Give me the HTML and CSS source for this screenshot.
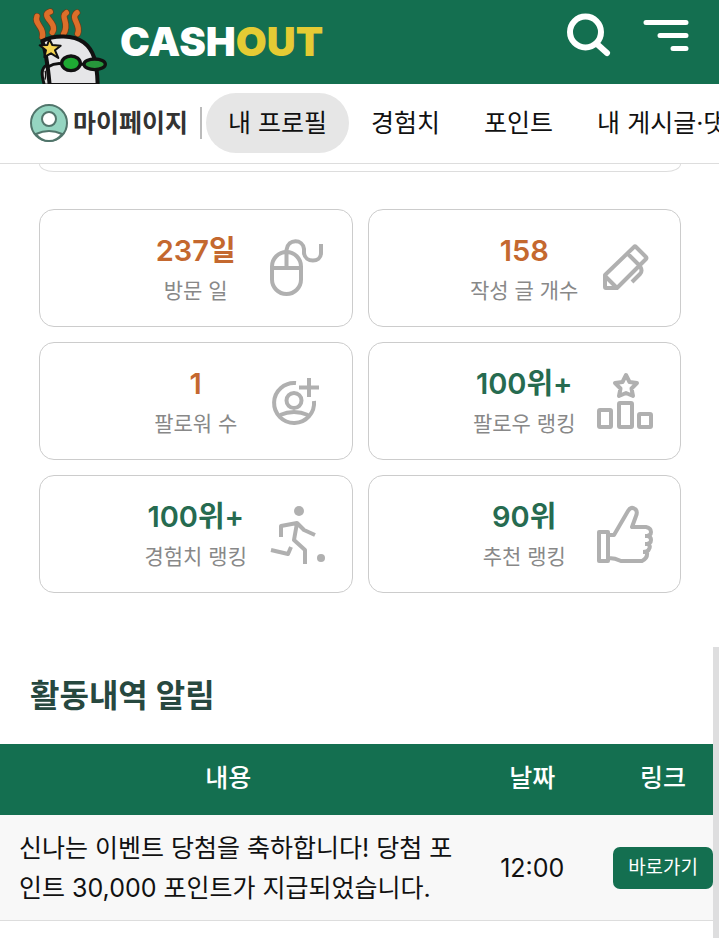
FILE: index.html
```
<!DOCTYPE html>
<html lang="ko">
<head>
    <meta charset="UTF-8">
    <meta name="viewport" content="width=device-width, initial-scale=1.0">
    <title>CASHOUT - 마이페이지</title>
    <link rel="stylesheet" href="styles.css">
</head>
<body>
    <header class="header">
        <a class="logo" href="#">
            <svg class="logo-mark" viewBox="0 0 270 237" aria-hidden="true">
                <!-- hair -->
                <g fill="none" stroke-linecap="round" stroke-linejoin="round">
                    <g stroke="#6b3a18" stroke-width="20">
                        <path d="M36 34C26 58 60 66 52 96"/>
                        <path d="M76 20C50 28 78 46 84 62Q88 74 82 82"/>
                        <path d="M124 23C104 36 136 54 116 86"/>
                        <path d="M156 23C134 40 170 58 158 86"/>
                    </g>
                    <g stroke="#dc6f2a" stroke-width="16">
                        <path d="M36 34C26 58 60 66 52 96"/>
                        <path d="M76 20C50 28 78 46 84 62Q88 74 82 82"/>
                        <path d="M124 23C104 36 136 54 116 86"/>
                        <path d="M156 23C134 40 170 58 158 86"/>
                    </g>
                </g>
                <!-- head -->
                <path d="M66 180C46 190 50 212 58 240H80Z" fill="#ddd" stroke="#111" stroke-width="9"/>
                <path d="M52 108C88 88 146 90 176 112C206 134 216 170 218 240H74C70 200 66 150 52 108Z" fill="#e6e6e8" stroke="#111" stroke-width="12" stroke-linejoin="round"/>
                <path d="M60 197Q64 206 60 224" fill="none" stroke="#111" stroke-width="4"/>
                <!-- glasses -->
                <path d="M68 186Q88 174 108 176M168 178H184" fill="none" stroke="#111" stroke-width="9"/>
                <ellipse cx="138" cy="175" rx="28" ry="22" fill="#1eaa33" stroke="#111" stroke-width="10"/>
                <ellipse cx="209" cy="178" rx="32" ry="16" fill="#27963b" stroke="#111" stroke-width="10"/>
                <path d="M73 102L82 120L107 122L90 136L100 159L78 145L58 156L63 136L44 121L67 120Z" fill="#f5d552" stroke="#111" stroke-width="6" stroke-linejoin="round"/>
            </svg>
            <span class="logo-text">CASH<span class="logo-accent">OUT</span></span>
        </a>
        <div class="header-actions">
            <button class="icon-btn" type="button" aria-label="검색">
                <svg width="46" height="46" viewBox="0 0 46 46" fill="none" stroke="#fff" stroke-width="6" stroke-linecap="round">
                    <circle cx="18.500" cy="20" r="15.500"/>
                    <path d="M30 32L40 41"/>
                </svg>
            </button>
            <button class="icon-btn" type="button" aria-label="메뉴">
                <svg width="46" height="46" viewBox="0 0 46 46" fill="none" stroke="#fff" stroke-width="5" stroke-linecap="round">
                    <path d="M3 10.500H43M17 23.500H43M30 36.500H43"/>
                </svg>
            </button>
        </div>
    </header>

    <nav class="nav">
        <a class="nav-title" href="#">
            <svg width="38" height="38" viewBox="0 0 38 38" aria-hidden="true">
                <circle cx="19" cy="19" r="18" fill="#95d5c1" stroke="#51756b" stroke-width="2"/>
                <path d="M6 30Q19 24 32 30Q27 37 19 37Q11 37 6 30Z" fill="#fff" stroke="#51756b" stroke-width="2"/>
                <circle cx="19" cy="15" r="7" fill="#fff" stroke="#51756b" stroke-width="2"/>
            </svg>
            마이페이지
        </a>
        <ul class="nav-list">
            <li><a class="nav-link active" href="#">내 프로필</a></li>
            <li><a class="nav-link" href="#">경험치</a></li>
            <li><a class="nav-link" href="#">포인트</a></li>
            <li><a class="nav-link" href="#">내 게시글·댓글</a></li>
        </ul>
    </nav>

    <main class="content">
        <div class="profile-card"></div>

        <section class="stats">
            <div class="stat">
                <div class="stat-text">
                    <p class="stat-value">237일</p>
                    <p class="stat-label">방문 일</p>
                </div>
                <svg class="stat-icon" viewBox="0 0 56 56">
                    <rect x="3" y="12" width="29" height="42" rx="14.500"/>
                    <path d="M3 28H32M17.500 28V10C19 -2 34 -1 35 9V13C36 23 52 23 52 13V4"/>
                </svg>
            </div>
            <div class="stat">
                <div class="stat-text">
                    <p class="stat-value">158</p>
                    <p class="stat-label">작성 글 개수</p>
                </div>
                <svg class="stat-icon" viewBox="0 0 56 56">
                    <path d="M8 35L37 7Q38 6 39 7L49 17Q50 18 49 19L20 48H9Q8 48 8 47ZM8 36L20 48M31 14L43 26M43 26Q46 31 43 34L35 42"/>
                </svg>
            </div>
            <div class="stat">
                <div class="stat-text">
                    <p class="stat-value">1</p>
                    <p class="stat-label">팔로워 수</p>
                </div>
                <svg class="stat-icon" viewBox="0 0 56 56">
                    <path d="M27 10A20 20 0 1 0 45 28M40 5V24M30 14.500H50"/>
                    <circle cx="25" cy="27.500" r="7.500"/>
                    <path d="M11 42Q25 36 39 42"/>
                </svg>
            </div>
            <div class="stat">
                <div class="stat-text">
                    <p class="stat-value rank">100위+</p>
                    <p class="stat-label">팔로우 랭킹</p>
                </div>
                <svg class="stat-icon" viewBox="0 0 56 56">
                    <path d="M29 2L32.500 9L40 10L34.500 15.500L36 23L29 20L22 23L23.500 15.500L18 10L25.500 9Z"/>
                    <rect x="2" y="37" width="12" height="17" rx="1"/>
                    <rect x="22" y="30" width="13" height="24" rx="1"/>
                    <rect x="42" y="41" width="12" height="13" rx="1"/>
                </svg>
            </div>
            <div class="stat">
                <div class="stat-text">
                    <p class="stat-value rank">100위+</p>
                    <p class="stat-label">경험치 랭킹</p>
                </div>
                <svg class="stat-icon" viewBox="0 0 56 56">
                    <g fill="#b0b0b0" stroke="none">
                        <circle cx="30" cy="5" r="5"/>
                        <circle cx="52" cy="52" r="4"/>
                    </g>
                    <path d="M12 31V20L28 17L35 24L46 29M28 17L25 34L36 44V58M2 44L19 48L22 41"/>
                </svg>
            </div>
            <div class="stat">
                <div class="stat-text">
                    <p class="stat-value rank">90위</p>
                    <p class="stat-label">추천 랭킹</p>
                </div>
                <svg class="stat-icon" viewBox="0 0 56 56">
                    <path d="M2 26H11V55H2ZM12 29H17L31 5Q34 0 38 3Q41 5 39 10L35 21H49Q54 22 54 26Q54 30 48 30M49 30H51Q54 31 54 34Q54 38 48 38M49 38H51Q54 40 52 43Q51 46 46 46M47 46H50Q51 52 45 55H24Q18 52 12 52"/>
                </svg>
            </div>
        </section>
    </main>

    <section class="activity">
        <h2 class="activity-title">활동내역 알림</h2>
        <table class="activity-table">
            <thead>
                <tr>
                    <th class="col-content">내용</th>
                    <th class="col-date">날짜</th>
                    <th class="col-link">링크</th>
                </tr>
            </thead>
            <tbody>
                <tr>
                    <td class="message">신나는 이벤트 당첨을 축하합니다! 당첨 포인트 30,000 포인트가 지급되었습니다.</td>
                    <td class="date">12:00</td>
                    <td><a class="go-btn" href="#">바로가기</a></td>
                </tr>
            </tbody>
        </table>
    </section>
</body>
</html>
```

FILE: styles.css
```
* {
    margin: 0;
    padding: 0;
    box-sizing: border-box;
}

body {
    font-family: Inter, 'Noto Sans CJK KR', sans-serif;
    font-size: 25px;
    line-height: 40px;
    min-height: 100vh;
    display: flex;
    flex-direction: column;
    background: #fff;
    color: #111;
    overflow-x: hidden;
}

a {
    color: inherit;
    text-decoration: none;
}

.header {
    height: 84px;
    padding: 0 30px 0 25px;
    display: flex;
    justify-content: space-between;
    background: #146f50;
}

.logo {
    display: flex;
    align-items: center;
    gap: 5px;
}

.logo-mark {
    width: 90px;
    height: 79px;
    align-self: flex-end;
}

.logo-text {
    font-size: 40px;
    font-weight: 900;
    color: #fff;
}

.logo-accent {
    color: #e5cb34;
}

.header-actions {
    display: flex;
    gap: 30px;
    padding-top: 12px;
}

.icon-btn {
    width: 46px;
    height: 46px;
    border: none;
    background: none;
    cursor: pointer;
}

.nav {
    height: 80px;
    padding: 0 0 2px 30px;
    display: flex;
    align-items: center;
    border-bottom: 1px solid #ddd;
    white-space: nowrap;
    overflow: hidden;
}

.nav-title {
    display: flex;
    align-items: center;
    gap: 5px;
    font-weight: 700;
    color: #333;
}

.nav-title::after {
    content: '';
    width: 2px;
    height: 32px;
    margin: 0 4px 0 7px;
    background: #bbb;
}

.nav-list {
    display: flex;
    list-style: none;
}

.nav-link {
    display: block;
    padding: 10px 22px;
    line-height: 40px;
    border-radius: 30px;
}

.nav-link.active {
    background: #e6e6e6;
}

.content {
    padding: 0 38px 0 39px;
}

.profile-card {
    height: 8px;
    border: 1px solid #ddd;
    border-top: none;
    border-radius: 0 0 15px 15px / 0 0 8px 8px;
}

.stats {
    padding: 37px 0 54px;
    display: grid;
    grid-template-columns: 1fr 1fr;
    gap: 15px;
}

.stat {
    display: grid;
    grid-template-columns: 1fr auto 1fr;
    align-items: center;
    padding: 15px 27px;
    border: 1px solid #ccc;
    border-radius: 15px;
}

.stat-text {
    grid-column: 2;
    padding-top: 6px;
    text-align: center;
}

.stat-value {
    font-size: 29px;
    font-weight: 600;
    color: #c4682f;
}

.stat-value.rank {
    color: #266b50;
}

.stat-label {
    font-size: 21px;
    color: #888;
}

.stat-icon {
    width: 56px;
    height: 56px;
    justify-self: end;
    overflow: visible;
    fill: none;
    stroke: #b0b0b0;
    stroke-width: 4;
    stroke-linejoin: round;
}

.activity {
    flex: 1;
    border-right: 6px solid #dededf;
}

.activity-title {
    padding: 29px 30px 28px;
    font-size: 32px;
    font-weight: 600;
    color: #27483f;
}

.activity-table {
    width: 100%;
    table-layout: fixed;
    border-collapse: collapse;
}

.activity-table th {
    padding: 14px 0 17px;
    font-weight: 500;
    color: #fff;
    background: #146f50;
}

.activity-table td {
    padding: 13px 0 12px;
    text-align: center;
    background: #f8f8f8;
    border-bottom: 1px solid #ddd;
}

.activity-table .message {
    padding-left: 19px;
    text-align: left;
}

.activity-table .date,
.activity-table .col-date {
    padding-right: 5px;
}

.col-content {
    width: 64%;
}

.col-date {
    width: 22%;
}

.col-link {
    width: 14%;
}

.go-btn {
    display: block;
    border-radius: 7px;
    font-size: 19px;
    line-height: 42px;
    color: #fff;
    background: #146f50;
}
```
